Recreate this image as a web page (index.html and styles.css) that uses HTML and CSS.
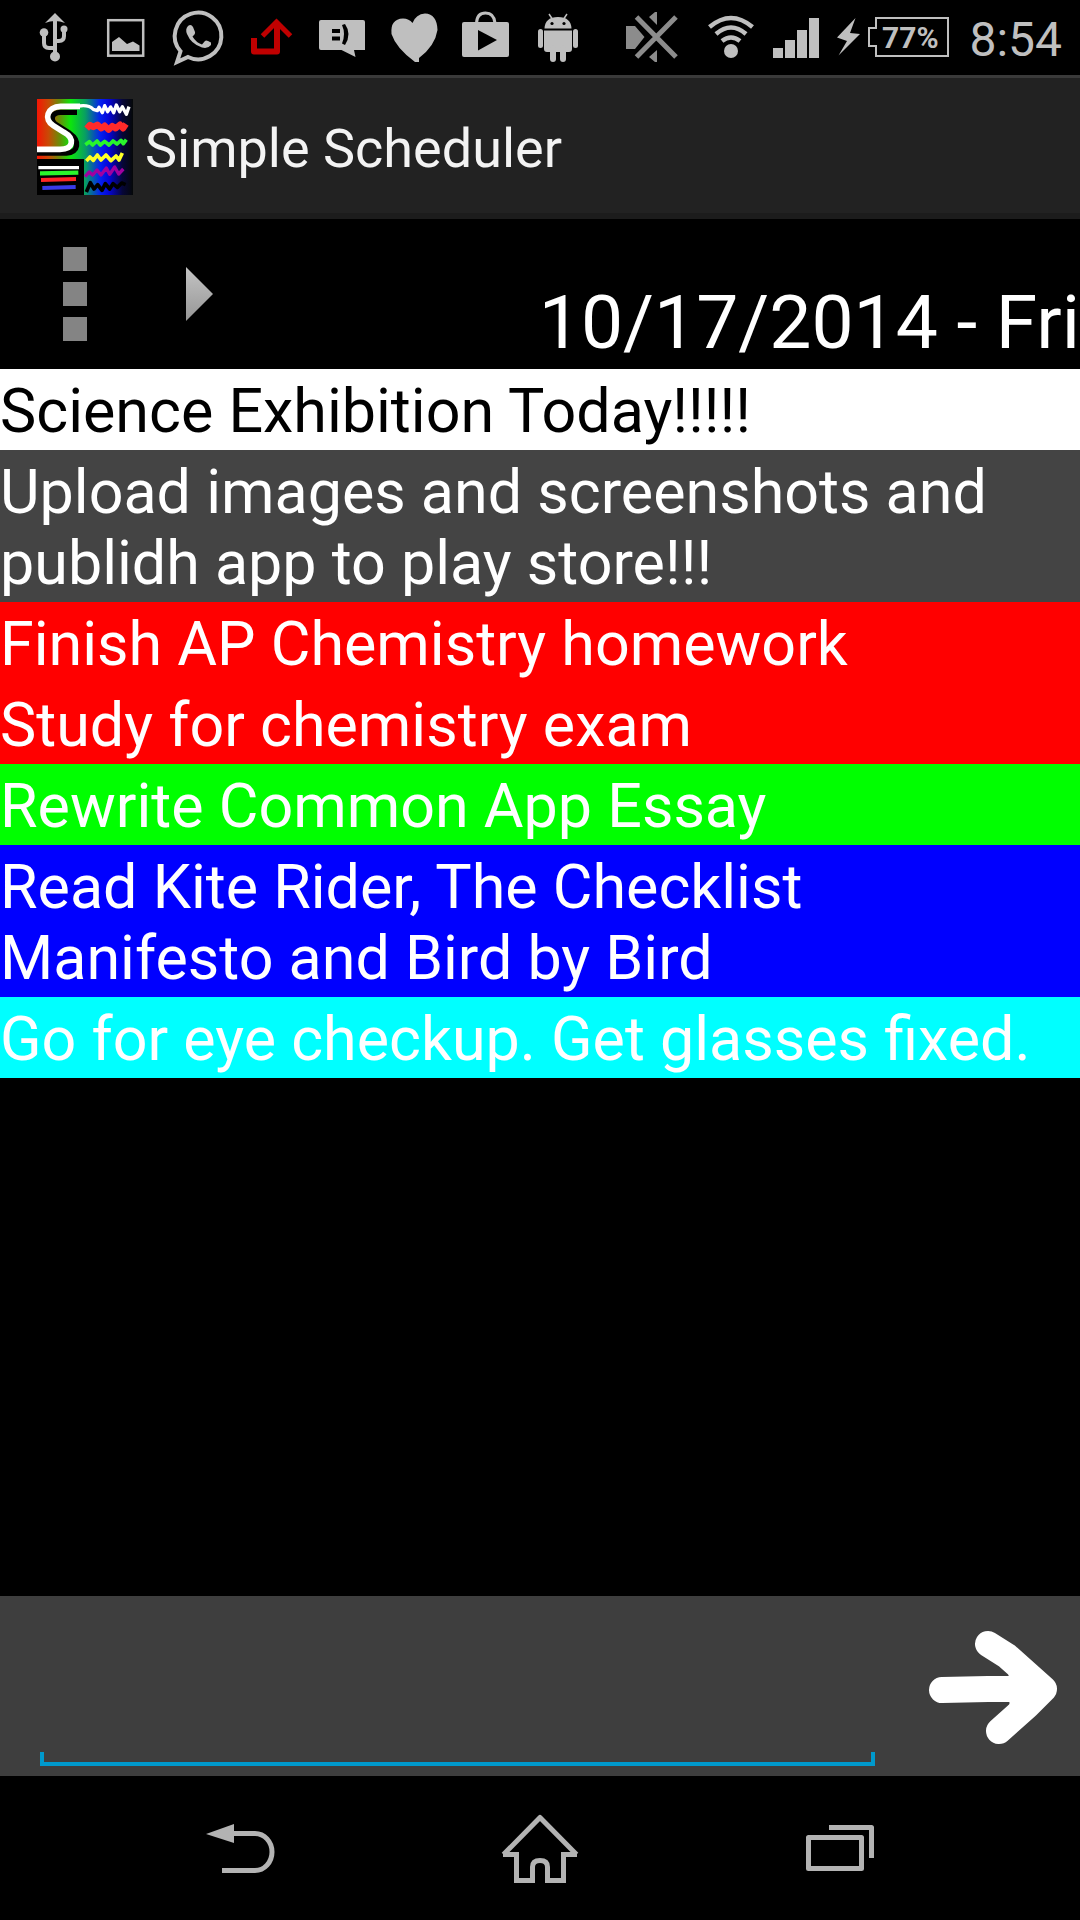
FILE: index.html
```html
<!DOCTYPE html>
<html lang="en">
<head>
<meta charset="utf-8">
<meta name="viewport" content="width=device-width, initial-scale=1">
<title>Simple Scheduler</title>
<link rel="stylesheet" href="styles.css">
</head>
<body>
<div class="status-bar">
  <div class="notifications">
    <svg class="notice" viewBox="18 0 72 75" aria-hidden="true"><g fill="none" stroke="#bfbfbf" stroke-width="4"><path d="M55 20V56M44 33V43Q44 48 49 48H55M64 30V36Q64 41 59 41H55"/></g><path fill="#bfbfbf" d="M55 13L65 23Q60 21 55 21Q50 21 45 23Z"/><g fill="#bfbfbf"><circle cx="55" cy="56.500" r="5"/><circle cx="44" cy="32.500" r="4.300"/><circle cx="64" cy="29" r="3.500"/></g></svg>
    <svg class="notice" viewBox="90 0 72 75" aria-hidden="true"><rect x="108.200" y="20.200" width="35" height="35.500" fill="none" stroke="#bfbfbf" stroke-width="2.500"/><path fill="#bfbfbf" d="M112 42L119 37L127 44L133 41.500L139.500 45.500V51H112Z"/></svg>
    <svg class="notice" viewBox="162 0 72 75" aria-hidden="true"><path fill="none" stroke="#bfbfbf" stroke-width="4" d="M177 62L180.500 51.300A23.300 23.300 0 1 1 188 57Z"/><path fill="#bfbfbf" d="M188 26Q191 23.500 193 27L195 32Q195.500 34 192.500 36.500Q196 42.500 202 44.500L205 41Q206 40 208 41L211 42.500V45Q208 49 202 47.500Q191 44 187 34Q185 29 188 26Z"/></svg>
    <svg class="notice" viewBox="234 0 72 75" aria-hidden="true"><path fill="none" stroke="#c00000" stroke-width="6" stroke-linejoin="round" d="M254 38V51.500H277V24"/><path fill="none" stroke="#c00000" stroke-width="5" d="M262.500 36L276.500 22L290.500 36"/></svg>
    <svg class="notice" viewBox="306 0 72 75" aria-hidden="true"><path fill="#bfbfbf" d="M321 20H363Q365 20 365 22V50H354L355.500 57L341.500 50H321Q319 50 319 48V22Q319 20 321 20Z"/><path fill="#000" d="M332 29H340V33H332ZM332 36.500H340V40.500H332ZM342 25L345 24Q352 34 345 45L342 43.500Q346 34 342 25Z"/></svg>
    <svg class="notice" viewBox="378 0 72 75" aria-hidden="true"><path fill="#bfbfbf" d="M412.500 23Q416 14 425 13.500Q437 14 437.500 30Q435 46 419 58L419 62L415 62Q396 48 391.500 34Q390 19 403 18.500Q409 18.500 412.500 23Z"/></svg>
    <svg class="notice" viewBox="450 0 72 75" aria-hidden="true"><path fill="none" stroke="#bfbfbf" stroke-width="3" d="M476.500 23Q477 13 485.500 13Q494 13 495 23"/><rect x="462" y="22" width="47" height="35" rx="2" fill="#bfbfbf"/><path d="M478 30L497 40L478 50.500Z"/></svg>
    <svg class="notice" viewBox="522 0 72 75" aria-hidden="true"><g fill="#bfbfbf"><path d="M544.500 28.500Q545 17 558 17Q571 17 571.500 28.500ZM544 30.500H572V49Q572 52 569 52H547Q544 52 544 49Z"/><rect x="538" y="29" width="5" height="19" rx="2.500"/><rect x="573" y="29" width="5" height="19" rx="2.500"/><rect x="550" y="45" width="6" height="17" rx="3"/><rect x="560" y="45" width="6" height="17" rx="3"/></g><path stroke="#bfbfbf" stroke-width="1.500" d="M549 14L553 20M567 14L563 20"/><circle cx="552" cy="23.500" r="1.600"/><circle cx="564" cy="23.500" r="1.600"/></svg>
  </div>
  <div class="indicators">
    <svg class="mute" viewBox="624 0 56 75" aria-hidden="true"><path fill="#8c8c8c" d="M626 26H635L644.500 37L635 49H626ZM649 17L655 12H657V25ZM657 50V62H655L649 57Z"/><path stroke="#8c8c8c" stroke-width="5" d="M636.500 17L676 57M676 17L636.500 57"/></svg>
    <svg class="wifi" viewBox="706 0 50 75" aria-hidden="true"><g fill="none" stroke="#bfbfbf" stroke-width="4.500"><path d="M709.500 27Q731 9 752.500 27M716 34Q731 21 746 34M722 41Q731 34 740 41"/></g><circle cx="731" cy="51" r="7" fill="#bfbfbf"/></svg>
    <svg class="signal" viewBox="773 0 46 75" aria-hidden="true"><path fill="#bfbfbf" d="M773 48H783V58H773ZM785 40H795V58H785ZM797 30H807V58H797ZM809 18H819V58H809Z"/></svg>
    <svg class="battery" viewBox="836 0 114 75" role="img" aria-label="Battery charging, 77%"><path fill="#bfbfbf" d="M855.500 18L837 37.500L847 41L838.500 55.500L860 34L850 33Z"/><path fill="none" stroke="#bfbfbf" stroke-width="2" d="M877 18H948V56H876V46H869V28H876V18Z"/><text class="charge" x="882" y="48">77%</text></svg>
    <span class="clock">8:54</span>
  </div>
</div>

<header class="app-bar">
  <svg class="app-icon" viewBox="21 27 288 288" aria-hidden="true">
    <defs><linearGradient id="spectrum"><stop offset="0" stop-color="#f51505"/><stop offset=".12" stop-color="#c94a05"/><stop offset=".24" stop-color="#659008"/><stop offset=".35" stop-color="#0ce50c"/><stop offset=".5" stop-color="#08a060"/><stop offset=".66" stop-color="#0420f0"/><stop offset=".75" stop-color="#0505d5"/><stop offset=".89" stop-color="#060638"/><stop offset="1" stop-color="#050808"/></linearGradient></defs>
    <rect x="21" y="27" width="288" height="288" fill="url(#spectrum)"/>
    <g fill="none" stroke-linejoin="round">
      <path stroke="#000" stroke-width="16" d="M141 67H90C60 69 62 94 80 105L119 130C151 152 145 189 110 189H21"/>
      <path stroke="#fff" stroke-width="17" d="M21 178H90C132 178 134 145 102 127L70 107C40 88 51 51 92 49H150"/>
      <path stroke="#fff" stroke-width="10" d="M148 48Q176 44 190 58L202 62L207 52L217 68L224 47L233 65L242 51L251 68L259 45L269 65L277 50L289 73L297 50"/>
      <path fill="#000" stroke="none" d="M21 207H162V315H21Z"/>
      <path stroke="#fff" stroke-width="10" d="M25 233H147"/><path stroke="#29f52c" stroke-width="13" d="M30 250L145 248"/><path stroke="#ff2626" stroke-width="12" d="M33 270L138 267"/><path stroke="#393be8" stroke-width="12" d="M37 294L137 291"/>
      <path stroke="#ff2a2a" stroke-width="19" d="M170 116L180 105L190 111L202 104L214 115L224 107L236 119L247 108L257 115L270 104L279 115L288 102"/>
      <path stroke="#29f52c" stroke-width="11" d="M166 164L178 155L188 165L201 153L211 165L224 154L237 165L249 153L261 162L273 151L280 161L289 149"/>
      <path stroke="#ffff27" stroke-width="11" d="M169 213L180 201L190 211L202 195L213 210L228 195L243 212L258 198L267 210L277 189"/>
      <path stroke="#a000a0" stroke-width="10" d="M165 260L178 246L188 255L201 240L213 255L229 234L239 253L254 231L266 252L280 237"/>
      <path stroke="#000" stroke-width="11" d="M169 306L181 278L192 297L203 284L216 301L226 281L239 297L249 281L262 292L275 279L287 284"/>
    </g>
  </svg>
  <h1 class="app-title">Simple Scheduler</h1>
</header>

<main class="planner">
  <div class="day-bar">
    <button class="day-button" type="button" aria-label="Menu"><svg class="menu-icon" viewBox="0 0 24 94"><path fill="#848484" d="M0 0H24V24H0ZM0 35H24V59H0ZM0 70H24V94H0Z"/></svg></button>
    <button class="day-button next-day" type="button" aria-label="Next day"><svg class="next-icon" viewBox="0 0 28 54"><defs><linearGradient id="shade" x2="0" y2="1"><stop stop-color="#c4c4c4"/><stop offset="1" stop-color="#969696"/></linearGradient></defs><path fill="url(#shade)" d="M0 0L27 27L0 54Z"/></svg></button>
    <h2 class="date">10/17/2014 - Fri</h2>
  </div>
  <ul class="tasks">
    <li class="task white">Science Exhibition Today!!!!!</li>
    <li class="task gray">Upload images and screenshots and publidh app to play store!!!</li>
    <li class="task red">Finish AP Chemistry homework</li>
    <li class="task red">Study for chemistry exam</li>
    <li class="task green">Rewrite Common App Essay</li>
    <li class="task blue">Read Kite Rider, The Checklist Manifesto and Bird by Bird</li>
    <li class="task cyan">Go for eye checkup. Get glasses fixed.</li>
  </ul>
</main>

<form class="composer">
  <input class="entry" type="text" aria-label="New task">
  <button class="send" type="button" aria-label="Add task"><svg class="send-icon" viewBox="0 0 180 180"><path fill="none" stroke="#fff" stroke-width="26" stroke-linecap="round" stroke-linejoin="round" d="M42 94L88 93H140M88 48L107 60L144 93L127 110L99 135"/><path fill="#fff" d="M108 61L150 88V100L110 125Z"/></svg></button>
</form>

<nav class="nav-bar">
  <button class="nav-button" type="button" aria-label="Back"><svg class="nav-icon" viewBox="195 1776 90 144"><path fill="#b3b3b3" d="M206 1834L234 1824V1843Z"/><path fill="none" stroke="#b3b3b3" stroke-width="5" d="M233 1833.500H255A17 18.500 0 0 1 255 1870.500H222"/></svg></button>
  <button class="nav-button" type="button" aria-label="Home"><svg class="nav-icon" viewBox="495 1776 90 144"><path fill="none" stroke="#b3b3b3" stroke-width="5" stroke-linejoin="round" d="M503.500 1854.500L540 1817.500L576.500 1854.500"/><path fill="none" stroke="#b3b3b3" stroke-width="5" d="M503 1854.500H516.500V1880.500H532.500V1867Q532.500 1860.500 540 1860.500Q547.500 1860.500 547.500 1867V1880.500H563.500V1854.500H577"/></svg></button>
  <button class="nav-button" type="button" aria-label="Recent apps"><svg class="nav-icon" viewBox="795 1776 90 144"><path fill="none" stroke="#b3b3b3" stroke-width="5" stroke-linejoin="round" d="M808.500 1837.500H861.500V1868.500H808.500ZM829 1827.500H871.500V1858"/></svg></button>
</nav>
</body>
</html>
```
FILE: styles.css
```css
* {
  box-sizing: border-box;
}

body {
  display: flex;
  flex-direction: column;
  min-height: 100vh;
  margin: 0;
  background: #000;
  color: #fff;
  font-family: Roboto, "Noto Sans", sans-serif;
}

svg {
  display: block;
  flex: none;
}

button {
  display: flex;
  align-items: center;
  justify-content: center;
  padding: 0;
  border: 0;
  background: none;
}

.status-bar {
  display: flex;
  justify-content: space-between;
  height: 75px;
  padding: 0 18px;
}

.notifications,
.indicators {
  display: flex;
}

.notice {
  width: 72px;
  height: 75px;
}

.indicators {
  align-items: center;
  color: #bfbfbf;
}

.mute {
  width: 56px;
  height: 75px;
  margin-right: 26px;
}

.wifi {
  width: 50px;
  height: 75px;
  margin-right: 17px;
}

.signal {
  width: 46px;
  height: 75px;
  margin-right: 17px;
}

.battery {
  width: 114px;
  height: 75px;
  margin-right: 19px;
}

.charge {
  fill: #bfbfbf;
  font-size: 30px;
  font-weight: 700;
}

.clock {
  padding-top: 4px;
  font-size: 48px;
  line-height: 72px;
}

.app-bar {
  display: flex;
  align-items: center;
  gap: 12px;
  height: 144px;
  padding: 3px 0 0 37px;
  border-top: 3px solid #3a3a3a;
  border-bottom: 6px solid #1c1c1c;
  background: #222;
}

.app-icon {
  width: 96px;
  height: 96px;
}

.app-title {
  margin: 0;
  padding-top: 4px;
  color: #f3f3f3;
  font-size: 54px;
  font-weight: 400;
  line-height: 64px;
}

.planner {
  flex: 1;
}

.day-bar {
  display: flex;
  height: 150px;
}

.day-button {
  width: 150px;
}

.next-day {
  width: 100px;
}

.menu-icon {
  width: 24px;
  height: 94px;
}

.next-icon {
  width: 28px;
  height: 54px;
}

.date {
  align-self: flex-end;
  margin: 0 0 0 auto;
  font-size: 75px;
  font-weight: 400;
  line-height: 94px;
  white-space: nowrap;
}

.tasks {
  margin: 0;
  padding: 0;
  list-style: none;
}

.task {
  padding: 7px 0 3px;
  font-size: 61px;
  line-height: 71px;
}

.white {
  background: #fff;
  color: #000;
}

.gray {
  background: #444;
}

.red {
  background: #f00;
}

.green {
  background: #0f0;
}

.blue {
  background: #00f;
}

.cyan {
  background: #0ff;
}

.composer {
  display: flex;
  align-items: flex-end;
  height: 180px;
  padding-left: 40px;
  background: #3e3e3e;
}

.entry {
  flex: 1;
  min-width: 0;
  height: 120px;
  margin: 0 25px 10px 0;
  padding: 0 12px;
  border: 0;
  border-bottom: 4px solid #0099cc;
  outline: 0;
  background:
    linear-gradient(#0099cc, #0099cc) left bottom / 4px 10px no-repeat,
    linear-gradient(#0099cc, #0099cc) right bottom / 4px 10px no-repeat;
  color: #fff;
  font: inherit;
  font-size: 61px;
}

.send,
.send-icon {
  width: 180px;
  height: 180px;
}

.nav-bar {
  display: grid;
  grid-template-columns: repeat(3, 1fr);
  height: 144px;
  padding: 0 90px;
}

.nav-icon {
  width: 90px;
  height: 144px;
}
```
